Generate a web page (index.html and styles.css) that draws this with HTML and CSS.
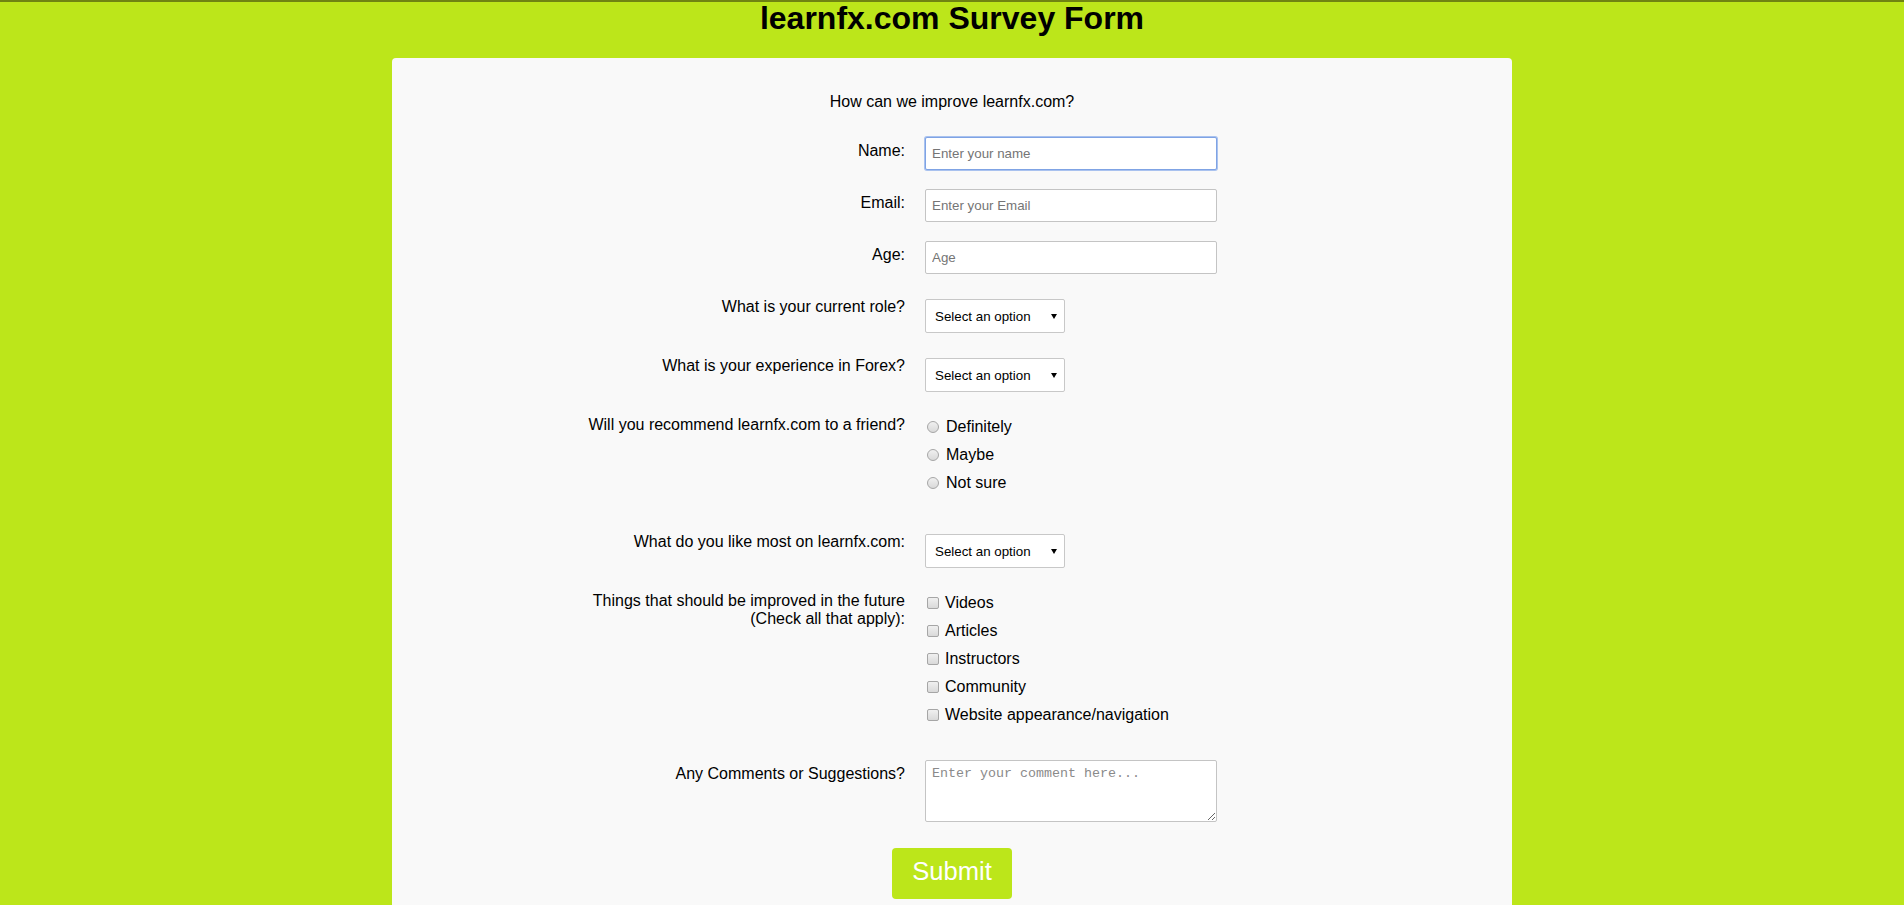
FILE: index.html
```html
<!DOCTYPE html>
<html lang="en">
<head>
<meta charset="utf-8">
<title>learnfx.com Survey Form</title>
<link rel="stylesheet" href="styles.css">
</head>
<body>
<h1 class="title">learnfx.com Survey Form</h1>
<form class="card">
  <p class="intro">How can we improve learnfx.com?</p>

  <div class="row">
    <label class="label" for="name">Name:</label>
    <div class="control"><input id="name" class="field field-focus" type="text" placeholder="Enter your name"></div>
  </div>

  <div class="row">
    <label class="label" for="email">Email:</label>
    <div class="control"><input id="email" class="field" type="text" placeholder="Enter your Email"></div>
  </div>

  <div class="row">
    <label class="label" for="age">Age:</label>
    <div class="control"><input id="age" class="field" type="text" placeholder="Age"></div>
  </div>

  <div class="row">
    <label class="label" for="role">What is your current role?</label>
    <div class="control">
      <span class="select-wrap"><select id="role" class="select"><option>Select an option</option></select></span>
    </div>
  </div>

  <div class="row">
    <label class="label" for="exp">What is your experience in Forex?</label>
    <div class="control">
      <span class="select-wrap"><select id="exp" class="select"><option>Select an option</option></select></span>
    </div>
  </div>

  <div class="row">
    <div class="label">Will you recommend learnfx.com to a friend?</div>
    <div class="control group">
      <label class="option"><input class="radio" type="radio" name="rec"> Definitely</label>
      <label class="option"><input class="radio" type="radio" name="rec"> Maybe</label>
      <label class="option"><input class="radio" type="radio" name="rec"> Not sure</label>
    </div>
  </div>

  <div class="row">
    <label class="label" for="like">What do you like most on learnfx.com:</label>
    <div class="control">
      <span class="select-wrap"><select id="like" class="select"><option>Select an option</option></select></span>
    </div>
  </div>

  <div class="row">
    <div class="label">Things that should be improved in the future<br>(Check all that apply):</div>
    <div class="control group">
      <label class="option"><input class="check" type="checkbox"> Videos</label>
      <label class="option"><input class="check" type="checkbox"> Articles</label>
      <label class="option"><input class="check" type="checkbox"> Instructors</label>
      <label class="option"><input class="check" type="checkbox"> Community</label>
      <label class="option"><input class="check" type="checkbox"> Website appearance/navigation</label>
    </div>
  </div>

  <div class="row">
    <label class="label" for="comments">Any Comments or Suggestions?</label>
    <div class="control"><textarea id="comments" class="comments" placeholder="Enter your comment here..."></textarea></div>
  </div>

  <div class="actions">
    <button type="button" class="submit">Submit</button>
  </div>
</form>
</body>
</html>
```
FILE: styles.css
```css
html {
  background: #bce61a;
}
body {
  margin: 0;
  border-top: 2px solid #6f8412;
  background: #bce61a;
  font-family: "Liberation Sans", Arial, sans-serif;
  color: #000;
  height: 903px;
  overflow: hidden;
}
.title {
  margin: 0;
  font-size: 32px;
  line-height: 33px;
  font-weight: bold;
  text-align: center;
}
.card {
  width: 1120px;
  margin: 23px auto 0;
  background: #f9f9f9;
  border-radius: 4px;
  padding: 35px 0 40px;
}
.intro {
  margin: 0 0 26px;
  font-size: 16px;
  line-height: 18px;
  text-align: center;
}
.row {
  display: grid;
  grid-template-columns: 513px 1fr;
  column-gap: 20px;
  margin-bottom: 19px;
}
.label {
  text-align: right;
  font-size: 16px;
  line-height: 18px;
  padding-top: 5px;
}
.control {
  display: flex;
  flex-direction: column;
  align-items: flex-start;
}
.field {
  box-sizing: border-box;
  width: 292px;
  height: 33px;
  border: 1px solid #c4c4c4;
  border-radius: 2px;
  background: #fff;
  padding: 0 6px;
  font-family: "Liberation Sans", Arial, sans-serif;
  font-size: 13.33px;
  color: #000;
  outline: none;
}
.field::placeholder {
  color: #757575;
}
.field-focus {
  border-color: #7fa3e4;
  box-shadow: 0 0 0 1px #a9c2ef;
  caret-color: #000;
}
.select-wrap {
  position: relative;
  display: inline-block;
  margin-top: 6px;
}
.select-wrap::after {
  content: "";
  position: absolute;
  right: 8px;
  top: 15px;
  border-left: 3px solid transparent;
  border-right: 3px solid transparent;
  border-top: 5px solid #000;
  pointer-events: none;
}
.select {
  -webkit-appearance: none;
  appearance: none;
  box-sizing: border-box;
  width: 140px;
  height: 34px;
  border: 1px solid #c8c8c8;
  border-radius: 2px;
  background: #fff;
  padding: 0 0 0 9px;
  font-family: "Liberation Sans", Arial, sans-serif;
  font-size: 13.33px;
  color: #000;
}
.group {
  padding-bottom: 14px;
}
.option {
  display: flex;
  align-items: center;
  height: 28px;
  font-size: 16px;
  line-height: 18px;
  margin-top: 2px;
  margin-bottom: -2px;
}
.radio,
.check {
  -webkit-appearance: none;
  appearance: none;
  box-sizing: border-box;
  width: 12px;
  height: 12px;
  margin: 0 7px 0 2px;
  border: 1px solid #a6a6a6;
  background: linear-gradient(#f0f0f0, #d9d9d9);
}
.radio {
  border-radius: 50%;
}
.check {
  border-radius: 2px;
  margin-right: 6px;
}
.comments {
  box-sizing: border-box;
  width: 292px;
  height: 62px;
  border: 1px solid #c4c4c4;
  border-radius: 2px;
  background: #fff;
  padding: 5px 6px;
  font-family: "Liberation Mono", "Courier New", monospace;
  font-size: 13.33px;
  resize: both;
}
.comments::placeholder {
  color: #8a8a8a;
}
.actions {
  display: flex;
  justify-content: center;
  padding-top: 7px;
}
.submit {
  width: 120px;
  height: 51px;
  border: none;
  border-radius: 4px;
  background: #bce61a;
  color: #fff;
  padding: 0 0 4px;
  font-family: "Liberation Sans", Arial, sans-serif;
  font-size: 25.6px;
}
```
